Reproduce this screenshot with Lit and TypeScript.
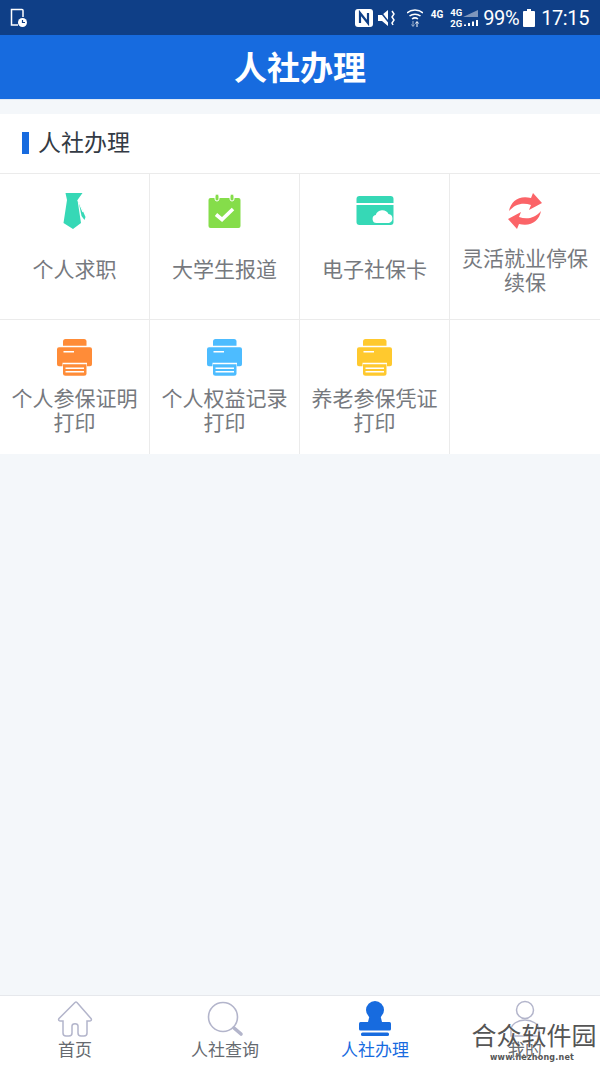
import { LitElement, css, html, svg } from 'lit'
import { customElement } from 'lit/decorators.js'

const tie = svg`<path d="M12.500 1h17l-5 7 3.500 23-8 6-9.500-6 3.500-23z" fill="#36d8b6"/>
  <path d="M25.500 9l7 16-1 3-3-4z" fill="#36d8b6"/>
  <path d="M25 8l5 12" stroke="#fff" stroke-width="1.200"/>`

const calendar = svg`<rect x="5.500" y="6" width="32" height="30" rx="2" fill="#85dd4a"/>
  <rect x="12" y="2" width="4" height="7" rx="2" fill="#85dd4a" stroke="#fff" stroke-width="1"/>
  <rect x="27" y="2" width="4" height="7" rx="2" fill="#85dd4a" stroke="#fff" stroke-width="1"/>
  <path d="M13 22.500l6 5 11-10.500" fill="none" stroke="#fff" stroke-width="3.600"/>`

const card = svg`<path d="M3.500 7a3 3 0 0 1 3-3h31a3 3 0 0 1 3 3v4h-37z" fill="#36d8b6"/>
  <path d="M3.500 13h37v17a3 3 0 0 1-3 3h-31a3 3 0 0 1-3-3z" fill="#36d8b6"/>
  <path d="M23.500 31a4 4 0 0 1-.8-7.900 7 7 0 0 1 12.800-1.100 4.600 4.600 0 0 1 .5 9z" fill="#fff"/>`

const syncArrow = svg`<path d="M6 19C8 9 16 3 28 6l2-5 9 10-13 7 2-5C20 10 12 12 6 19z" fill="#fb6468"/>`
const sync = svg`${syncArrow}<g transform="rotate(180 22 19)">${syncArrow}</g>`

const printer = (c: string) => svg`<path d="M10 8.700V4.500a2.500 2.500 0 0 1 2.500-2.500h18.500a2.500 2.500 0 0 1 2.500 2.500v4.200z" fill="${c}"/>
  <path d="M4 12.300a2 2 0 0 1 2-2h31a2 2 0 0 1 2 2v15a2 2 0 0 1-2 2h-3v-3.500H9.500v3.500H6a2 2 0 0 1-2-2z" fill="${c}"/>
  <rect x="10.500" y="14" width="10.500" height="1.500" fill="#fff"/>
  <path d="M10 27.300h23.500v8.900a2.500 2.500 0 0 1-2.500 2.500H12.500a2.500 2.500 0 0 1-2.500-2.500z" fill="${c}"/>
  <path d="M12.500 31.300h18.500M12.500 34.700h18.500" stroke="#fff" stroke-width="1.500"/>`

const items = [
  { name: '个人求职', icon: tie },
  { name: '大学生报道', icon: calendar },
  { name: '电子社保卡', icon: card },
  { name: '灵活就业停保续保', icon: sync },
  { name: '个人参保证明打印', icon: printer('#ff8c38') },
  { name: '个人权益记录打印', icon: printer('#4dbcff') },
  { name: '养老参保凭证打印', icon: printer('#ffc92e') },
  { name: '', icon: null },
]

const tabs = [
  {
    name: '首页',
    icon: svg`<path d="M20 2.500 4 18.500c-1 1.500 0 2.500 1.500 2.500H8v12c0 2 1 3 3 3h3c2 0 3-1 3-3v-7c0-3 6-3 6 0v7c0 2 1 3 3 3h3c2 0 3-1 3-3V21h2.500c1.500 0 2.500-1 1.500-2.500L22 2.500c-.7-.7-1.300-.7-2 0z" fill="none" stroke="#b3b5cb" stroke-width="1.500"/>`,
  },
  {
    name: '人社查询',
    icon: svg`<circle cx="18" cy="17" r="14.500" fill="none" stroke="#b3b5cb" stroke-width="1.600"/><path d="M29 28l7 6" stroke="#b3b5cb" stroke-width="3.600" stroke-linecap="round"/>`,
  },
  {
    name: '人社办理',
    active: true,
    icon: svg`<circle cx="20" cy="10" r="9" fill="#176bdf"/><path d="M15 14h10l2 8H13z" fill="#176bdf"/>
      <rect x="4" y="22" width="32" height="8.500" rx="1.500" fill="#176bdf"/><rect x="6" y="32.500" width="28" height="3.500" rx="1.500" fill="#176bdf"/>`,
  },
  {
    name: '我的',
    icon: svg`<circle cx="20" cy="10" r="8.500" fill="none" stroke="#b3b5cb" stroke-width="1.500"/><path d="M6 36v-6c0-6 7-10 14-10s14 4 14 10v6z" fill="none" stroke="#b3b5cb" stroke-width="1.500"/>`,
  },
]

@customElement('app-root')
export class AppRoot extends LitElement {
  static styles = css`
    :host {
      display: block;
      font-family: 'Noto Sans CJK SC', 'Liberation Sans', sans-serif;
    }
    .page {
      position: relative;
      height: 1067px;
      display: flex;
      flex-direction: column;
      background: #f4f7fa;
      overflow: hidden;
    }
    .status {
      height: 35px;
      flex: none;
      background: #0f3f87;
      display: flex;
      align-items: center;
      justify-content: space-between;
      padding: 0 11px 0 10px;
      color: #fff;
      font-family: Roboto, sans-serif;
    }
    .status svg {
      display: block;
      flex: none;
    }
    .status-right {
      display: flex;
      align-items: center;
      font-size: 20px;
      letter-spacing: -0.4px;
    }
    .mute {
      margin-left: 5px;
    }
    .wifi {
      margin-left: 10px;
    }
    .small-4g {
      margin: 0 0 7px 8px;
      font-size: 10px;
      font-weight: 700;
      letter-spacing: 0;
    }
    .net {
      display: flex;
      flex-direction: column;
      margin-left: 7px;
      font-size: 9.500px;
      font-weight: 700;
      line-height: 11px;
      letter-spacing: 0;
    }
    .pct {
      margin-left: 5px;
    }
    .battery {
      margin-left: 4px;
    }
    .time {
      margin-left: 6px;
    }
    .header {
      height: 64px;
      flex: none;
      background: #176bdf;
      color: #fff;
      font-size: 33px;
      font-weight: 700;
      display: flex;
      align-items: center;
      justify-content: center;
      padding-bottom: 2px;
      box-sizing: border-box;
    }
    .header-line {
      height: 1px;
      flex: none;
      background: #dfe9f6;
    }
    .section {
      margin-top: 14px;
      background: #fff;
      flex: none;
    }
    .title {
      height: 59px;
      box-sizing: border-box;
      padding: 0 0 2px 22px;
      display: flex;
      align-items: center;
      gap: 9px;
      font-size: 23px;
      color: #333a44;
    }
    .title::before {
      content: '';
      width: 7px;
      height: 22px;
      background: #176bdf;
    }
    .title span {
      padding-bottom: 4px;
    }
    .grid {
      display: grid;
      grid-template-columns: repeat(4, 150px);
      grid-template-rows: 146px 134px;
      border-top: 1px solid #ebebeb;
    }
    .cell {
      box-sizing: border-box;
      border-right: 1px solid #ebebeb;
      display: flex;
      flex-direction: column;
      align-items: center;
      font-size: 21px;
      line-height: 24px;
      color: #76797e;
      text-align: center;
      padding: 18px 10px 0;
    }
    .cell svg {
      display: block;
      flex: none;
    }
    .cell:nth-child(4n) {
      border-right: none;
    }
    .cell:nth-child(-n + 4) {
      border-bottom: 1px solid #ebebeb;
    }
    .label {
      margin-top: 20px;
    }
    .cell:nth-child(4) .label {
      margin-top: 9px;
    }
    .cell:nth-child(n + 5) {
      padding-top: 17px;
    }
    .cell:nth-child(n + 5) .label {
      margin-top: 4px;
    }
    .spacer {
      flex: 1;
    }
    .tabs {
      height: 72px;
      flex: none;
      display: flex;
      background: #fff;
      border-top: 1px solid #e6e8ec;
      box-sizing: border-box;
    }
    .tab {
      flex: 1;
      display: flex;
      flex-direction: column;
      align-items: center;
      padding-top: 4px;
      font-size: 17px;
      line-height: 22px;
      color: #666a70;
    }
    .tab svg {
      display: block;
      flex: none;
    }
    .tab.active {
      color: #176bdf;
    }
    .mark {
      position: absolute;
      left: 471px;
      top: 1019px;
      width: 126px;
      color: #555;
      text-align: center;
      text-shadow: 0 0 1px #fff;
    }
    .mark b {
      display: block;
      font-size: 25px;
      font-weight: 400;
      line-height: 30px;
      white-space: nowrap;
    }
    .mark span {
      display: block;
      margin-top: 3px;
      padding-right: 4px;
      font-family: 'DejaVu Sans', sans-serif;
      font-size: 8px;
      font-weight: 700;
      line-height: 11px;
      letter-spacing: 0.2px;
    }
  `

  render() {
    return html`
      <div class="page">
        <div class="status">
          <svg width="20" height="20" viewBox="0 0 20 20">
            <path d="M8 17H1.500V1.500h10.500a1 1 0 0 1 1 1V9" fill="none" stroke="#fff" stroke-width="1.500"/>
            <circle cx="12.500" cy="14.500" r="4.500" fill="#fff"/>
            <path d="M12.500 12v2.500h2.500" fill="none" stroke="#0f3f87" stroke-width="1.200"/>
          </svg>
          <div class="status-right">
            <svg width="18" height="18" viewBox="0 0 18 18">
              <rect width="18" height="18" rx="3" fill="#fff"/>
              <path d="M5 14V4l8 10V4" fill="none" stroke="#0f3f87" stroke-width="2.200"/>
            </svg>
            <svg class="mute" width="19" height="18" viewBox="0 0 19 18">
              <path d="M0 6h4l6-5v16l-6-5H0z" fill="#fff"/>
              <path d="M1 1l12 15" stroke="#0f3f87" stroke-width="1.500"/>
              <path d="M14 2l2 3-2 3 2 3-2 3 1 2" fill="none" stroke="#fff" stroke-width="1.500"/>
            </svg>
            <svg class="wifi" width="16" height="18" viewBox="0 0 16 18">
              <path d="M0 4c4-4 12-4 16 0M2.500 7c3-2.500 8-2.500 11 0M5 10c2-1.500 4-1.500 6 0" fill="none" stroke="#fff" stroke-width="1.500"/>
              <path d="M6 12v5M4.500 15.500l1.500 2 1.500-2" fill="none" stroke="#9fb3cf" stroke-width="1"/>
              <path d="M10 18v-5M8.500 14.500l1.500-2 1.500 2" fill="none" stroke="#fff" stroke-width="1"/>
            </svg>
            <span class="small-4g">4G</span>
            <div class="net"><span>4G</span><span>2G</span></div>
            <svg width="16" height="16" viewBox="0 0 16 16">
              <path d="M1 7 16 0v7z" fill="#7f97bd"/>
              <path d="M2 14.500h2V16H2zM6 13h2v3H6zM10 11.500h2V16h-2zM14 10h2v6h-2z" fill="#fff"/>
            </svg>
            <span class="pct">99%</span>
            <svg class="battery" width="12" height="18" viewBox="0 0 12 18">
              <path d="M4 0h4v2h3a1 1 0 0 1 1 1v14a1 1 0 0 1-1 1H1a1 1 0 0 1-1-1V3a1 1 0 0 1 1-1h3z" fill="#fff"/>
            </svg>
            <span class="time">17:15</span>
          </div>
        </div>
        <div class="header">人社办理</div>
        <div class="header-line"></div>
        <div class="section">
          <div class="title"><span>人社办理</span></div>
          <div class="grid">
            ${items.map(
              (it) => html`
                <div class="cell">
                  ${it.icon
                    ? html`<svg width="44" height="44" viewBox="0 0 44 44">${it.icon}</svg>`
                    : ''}
                  <div class="label">${it.name}</div>
                </div>
              `
            )}
          </div>
        </div>
        <div class="spacer"></div>
        <div class="tabs">
          ${tabs.map(
            (t) => html`
              <div class="tab ${t.active ? 'active' : ''}">
                <svg width="40" height="38" viewBox="0 0 40 38">${t.icon}</svg>
                <div>${t.name}</div>
              </div>
            `
          )}
        </div>
        <div class="mark">
          <b>合众软件园</b>
          <span>www.hezhong.net</span>
        </div>
      </div>
    `
  }
}
